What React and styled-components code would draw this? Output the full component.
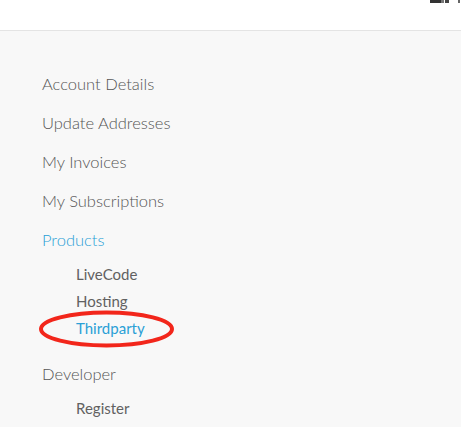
import React from "react";
import styled, { createGlobalStyle } from "styled-components";

const Global = createGlobalStyle`
  html, body { margin: 0; padding: 0; }
  body { background: #f8f8f8; font-family: Lato, "Open Sans", sans-serif; }
`;

const Header = styled.header`
  height: 30px;
  background: #fff;
  border-bottom: 1px solid #e4e4e4;
  display: flex;
  justify-content: flex-end;
  align-items: flex-start;
  overflow: hidden;
`;

const Nav = styled.nav`
  padding: 34px 0 0 42px;
  display: flex;
  flex-direction: column;
`;

const TopItem = styled.a`
  display: block;
  font-size: 16.5px;
  font-weight: 300;
  line-height: 39px;
  height: 39px;
  color: ${(p) => (p.$active ? "#2aa0d6" : "#555")};
  text-decoration: none;
`;

const SubList = styled.div`
  display: flex;
  flex-direction: column;
  padding: 0 0 ${(p) => p.$gapBelow || 0}px 34px;
  margin-top: 1px;
`;

const SubItem = styled.a`
  position: relative;
  display: block;
  width: max-content;
  font-size: 15px;
  font-weight: 400;
  line-height: 27px;
  height: 27px;
  color: ${(p) => (p.$active ? "#2aa0d6" : "#616161")};
  text-decoration: none;
`;

const Circle = styled.svg`
  position: absolute;
  left: -40px;
  top: -6px;
  overflow: visible;
  pointer-events: none;
`;

export default function App() {
  return (
    <>
      <Global />
      <Header>
        <svg width="40" height="6" viewBox="0 0 40 6">
          <rect x="9" y="0" width="11" height="3" fill="#333" />
          <rect x="20" y="0" width="3" height="3" fill="#777" />
          <rect x="24" y="0" width="4" height="3" fill="#444" />
          <rect x="37" y="0" width="2" height="3" fill="#666" />
        </svg>
      </Header>
      <Nav>
        <TopItem href="#">Account Details</TopItem>
        <TopItem href="#">Update Addresses</TopItem>
        <TopItem href="#">My Invoices</TopItem>
        <TopItem href="#">My Subscriptions</TopItem>
        <TopItem href="#" $active>Products</TopItem>
        <SubList $gapBelow={13}>
          <SubItem href="#">LiveCode</SubItem>
          <SubItem href="#">Hosting</SubItem>
          <SubItem href="#" $active>
            Thirdparty
            <Circle width="140" height="40" viewBox="0 0 140 40">
              <ellipse cx="70.5" cy="20" rx="65.5" ry="16.5" fill="none" stroke="#f2261b" strokeWidth="4" />
            </Circle>
          </SubItem>
        </SubList>
        <TopItem href="#">Developer</TopItem>
        <SubList>
          <SubItem href="#">Register</SubItem>
        </SubList>
      </Nav>
    </>
  );
}
